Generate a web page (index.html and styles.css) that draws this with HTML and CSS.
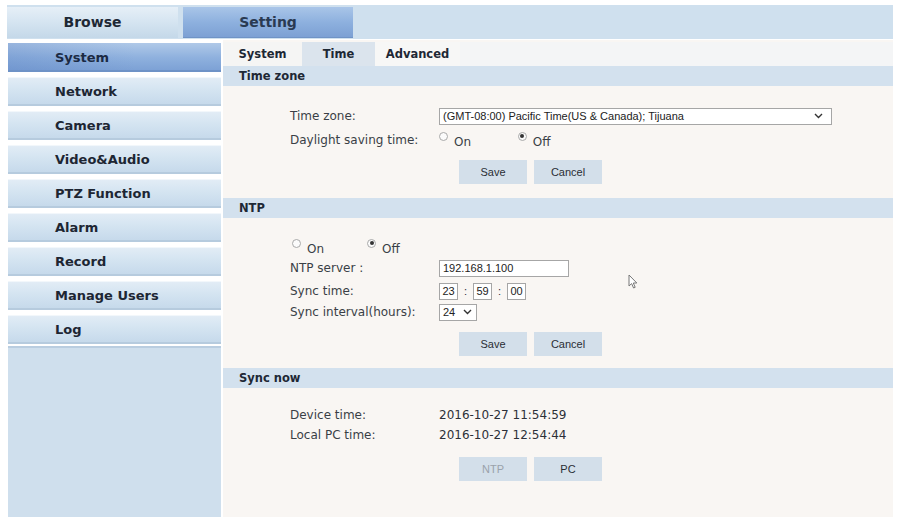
FILE: index.html
```html
<!DOCTYPE html>
<html lang="en">
<head>
<meta charset="UTF-8" />
<title>IP Camera - Setting - Time</title>
<link rel="stylesheet" href="styles.css">
</head>
<body>

<div class="page">
  <div class="topbar">
    <div class="top-tab browse">Browse</div>
    <div class="top-tab setting">Setting</div>
  </div>

  <div class="main">
    <div class="sidebar">
      <div class="menu-item active">System</div>
      <div class="menu-item">Network</div>
      <div class="menu-item">Camera</div>
      <div class="menu-item">Video&amp;Audio</div>
      <div class="menu-item">PTZ Function</div>
      <div class="menu-item">Alarm</div>
      <div class="menu-item">Record</div>
      <div class="menu-item">Manage Users</div>
      <div class="menu-item">Log</div>
      <div class="menu-fill"></div>
    </div>

    <div class="content">
      <div class="subtabs">
        <span class="subtab t-system">System</span>
        <span class="subtab t-time current">Time</span>
        <span class="subtab t-adv">Advanced</span>
      </div>

      <!-- time zone -->
      <div class="section-title">Time zone</div>
      <div class="section-body tz-body">
        <div class="row h24">
          <span class="label">Time zone:</span>
          <div class="select tz-select">
            <span>(GMT-08:00) Pacific Time(US &amp; Canada); Tijuana</span>
            <svg class="chev" width="9" height="6" viewBox="0 0 9 6"><path d="M1 1 L4.5 4.5 L8 1" fill="none" stroke="#333" stroke-width="1.4"/></svg>
          </div>
        </div>
        <div class="row h24">
          <span class="label">Daylight saving time:</span>
          <span class="radio-group">
            <span class="radio-opt"><i class="radio"></i>On</span>
            <span class="radio-opt"><i class="radio checked"></i>Off</span>
          </span>
        </div>
        <div class="buttons">
          <button class="btn">Save</button>
          <button class="btn">Cancel</button>
        </div>
      </div>

      <!-- ntp -->
      <div class="section-title">NTP</div>
      <div class="section-body ntp-body">
        <div class="row h20 ntp-radios">
          <span class="radio-opt"><i class="radio"></i>On</span>
          <span class="radio-opt"><i class="radio checked"></i>Off</span>
        </div>
        <div class="row h22">
          <span class="label">NTP server :</span>
          <input class="text-input server" type="text" value="192.168.1.100">
        </div>
        <div class="row h24">
          <span class="label">Sync time:</span>
          <span class="time-fields">
            <input class="text-input small" type="text" value="23">
            <span class="sep">:</span>
            <input class="text-input small" type="text" value="59">
            <span class="sep">:</span>
            <input class="text-input small" type="text" value="00">
          </span>
        </div>
        <div class="row h18">
          <span class="label">Sync interval(hours):</span>
          <div class="select interval">
            <span>24</span>
            <svg class="chev" width="9" height="6" viewBox="0 0 9 6"><path d="M1 1 L4.5 4.5 L8 1" fill="none" stroke="#333" stroke-width="1.4"/></svg>
          </div>
        </div>
        <div class="buttons ntp-buttons">
          <button class="btn">Save</button>
          <button class="btn">Cancel</button>
        </div>

        <svg class="cursor" width="10" height="15" viewBox="0 0 10 15"><path d="M1 1 L1 12 L3.6 9.6 L5.6 14 L7.2 13.3 L5.3 9 L8.8 9 Z" fill="#fff" stroke="#777" stroke-width="1"/></svg>
      </div>

      <!-- sync now -->
      <div class="section-title">Sync now</div>
      <div class="section-body sync-body">
        <div class="row h22">
          <span class="label">Device time:</span>
          <span class="value">2016-10-27 11:54:59</span>
        </div>
        <div class="row h18">
          <span class="label">Local PC time:</span>
          <span class="value">2016-10-27 12:54:44</span>
        </div>
        <div class="buttons sync-buttons">
          <button class="btn disabled">NTP</button>
          <button class="btn">PC</button>
        </div>
      </div>
    </div>
  </div>
</div>

</body>
</html>
```

FILE: styles.css
```css
body {
  margin: 0;
  background: #ffffff;
  font-family: "DejaVu Sans", Verdana, sans-serif;
  color: #2b3038;
}

.page {
  height: 517px;
  box-sizing: border-box;
  padding: 5px 5px 0 8px;
  display: flex;
  flex-direction: column;
}

/* top tabs */
.topbar {
  height: 34px;
  background: #cfe0ee;
  display: flex;
  align-items: center;
  gap: 5px;
  margin-left: -1px;
}

.top-tab {
  height: 31px;
  width: 171px;
  display: flex;
  align-items: center;
  justify-content: center;
  font-weight: bold;
  font-size: 14px;
  color: #1e2835;
}

.top-tab.browse {
  background: linear-gradient(#e6eff7, #d3e3f0 55%, #c4d8e9);
}

.top-tab.setting {
  width: 170px;
  background: linear-gradient(#a9c5e8, #8db0de 50%, #7b9fd3);
  box-shadow: inset 0 -1px 0 #6f93c6;
  color: #2a3a52;
}

/* layout */
.main {
  flex: 1;
  display: flex;
  gap: 2px;
  margin-top: 1px;
}

.sidebar {
  width: 213px;
  display: flex;
  flex-direction: column;
  gap: 5px;
  padding-top: 3px;
}

.menu-item {
  height: 29px;
  flex-shrink: 0;
  box-sizing: border-box;
  padding-left: 47px;
  display: flex;
  align-items: center;
  font-weight: bold;
  font-size: 13px;
  color: #1d2633;
  background: linear-gradient(#e3edf6, #d4e4f1 45%, #c4d8ea);
  box-shadow: inset 0 -2px 0 #b6cbde, inset 0 1px 0 #f2f7fb;
}

.menu-item.active {
  background: linear-gradient(90deg, rgba(80, 120, 190, 0.25), rgba(255, 255, 255, 0) 60%),
              linear-gradient(#b0c9e8, #8fb1de 50%, #7a9fd4);
  box-shadow: inset 0 -2px 0 #6e92c6;
  color: #1b2a44;
}

.menu-fill {
  flex: 1;
  margin-top: -3px;
  background: #cfdfed;
  border-top: 2px solid #b9cde0;
}

/* content */
.content {
  flex: 1;
  background: #f9f6f3;
  padding-top: 2px;
  display: flex;
  flex-direction: column;
  font-size: 12px;
  position: relative;
}

.subtabs {
  height: 24px;
  display: flex;
  background: #f4f5f6;
}

.subtab {
  display: flex;
  align-items: center;
  justify-content: center;
  font-weight: bold;
  font-size: 11.5px;
  color: #1e2835;
}

.t-system { width: 79px; background: #f5f5f4; }
.t-time { width: 73px; background: #dbe4ed; }
.t-adv { width: 85px; background: #f7f7f6; }

.section-title {
  height: 20px;
  display: flex;
  align-items: center;
  padding-left: 16px;
  background: #d3e1ee;
  font-weight: bold;
  font-size: 11.5px;
  color: #1e2835;
}

.section-body {
  padding-left: 67px;
  position: relative;
}

.tz-body { padding-top: 18px; padding-bottom: 14px; }
.ntp-body { padding-top: 19px; padding-bottom: 12px; }
.sync-body { padding-top: 16px; }

.row {
  display: flex;
  align-items: center;
}

.h18 { height: 18px; }
.h20 { height: 20px; }
.h22 { height: 22px; }
.h24 { height: 24px; }

.label {
  width: 149px;
  flex-shrink: 0;
  color: #3a3f46;
}

.value {
  color: #2c3038;
}

/* select look-alike */
.select {
  box-sizing: border-box;
  height: 17px;
  display: flex;
  align-items: center;
  justify-content: space-between;
  background: #ffffff;
  border: 1px solid #a6a6a6;
  padding: 0 8px 0 3px;
  font-family: "Liberation Sans", Arial, sans-serif;
  font-size: 11px;
  color: #222;
}

.tz-select { width: 393px; }

.interval {
  width: 38px;
  padding-right: 4px;
}

/* radios */
.radio-opt {
  display: inline-block;
  width: 75px;
  color: #3a3f46;
}

.radio {
  display: inline-block;
  box-sizing: border-box;
  width: 9px;
  height: 9px;
  border: 1px solid #a9a9a9;
  border-radius: 50%;
  background: #fbfbfb;
  vertical-align: 5px;
  margin-right: 6px;
  position: relative;
}

.radio.checked::after {
  content: '';
  position: absolute;
  left: 1.5px;
  top: 1.5px;
  width: 4px;
  height: 4px;
  border-radius: 50%;
  background: #333;
}

.ntp-radios {
  padding-left: 2px;
}

/* inputs */
.text-input {
  box-sizing: border-box;
  height: 17px;
  border: 1px solid #a6a6a6;
  background: #ffffff;
  padding: 0 3px;
  margin: 0;
  font-family: "Liberation Sans", Arial, sans-serif;
  font-size: 11px;
  color: #222;
  outline: none;
}

.text-input.server { width: 130px; }

.text-input.small {
  width: 19px;
  padding: 0 2px;
  text-align: center;
}

.time-fields {
  display: flex;
  align-items: center;
}

.sep {
  width: 15px;
  text-align: center;
  font-family: "Liberation Sans", Arial, sans-serif;
  font-size: 11px;
}

/* buttons */
.buttons {
  display: flex;
  gap: 7px;
  margin-left: 169px;
  margin-top: 8px;
}

.ntp-buttons { margin-top: 11px; }
.sync-buttons { margin-top: 13px; }

.btn {
  width: 68px;
  height: 24px;
  border: none;
  background: #d3dfea;
  font-family: "Liberation Sans", Arial, sans-serif;
  font-size: 11px;
  color: #2a2e35;
  padding: 0;
}

.btn.disabled {
  color: #9aa2ab;
}

.cursor {
  position: absolute;
  left: 405px;
  top: 56px;
}
```
